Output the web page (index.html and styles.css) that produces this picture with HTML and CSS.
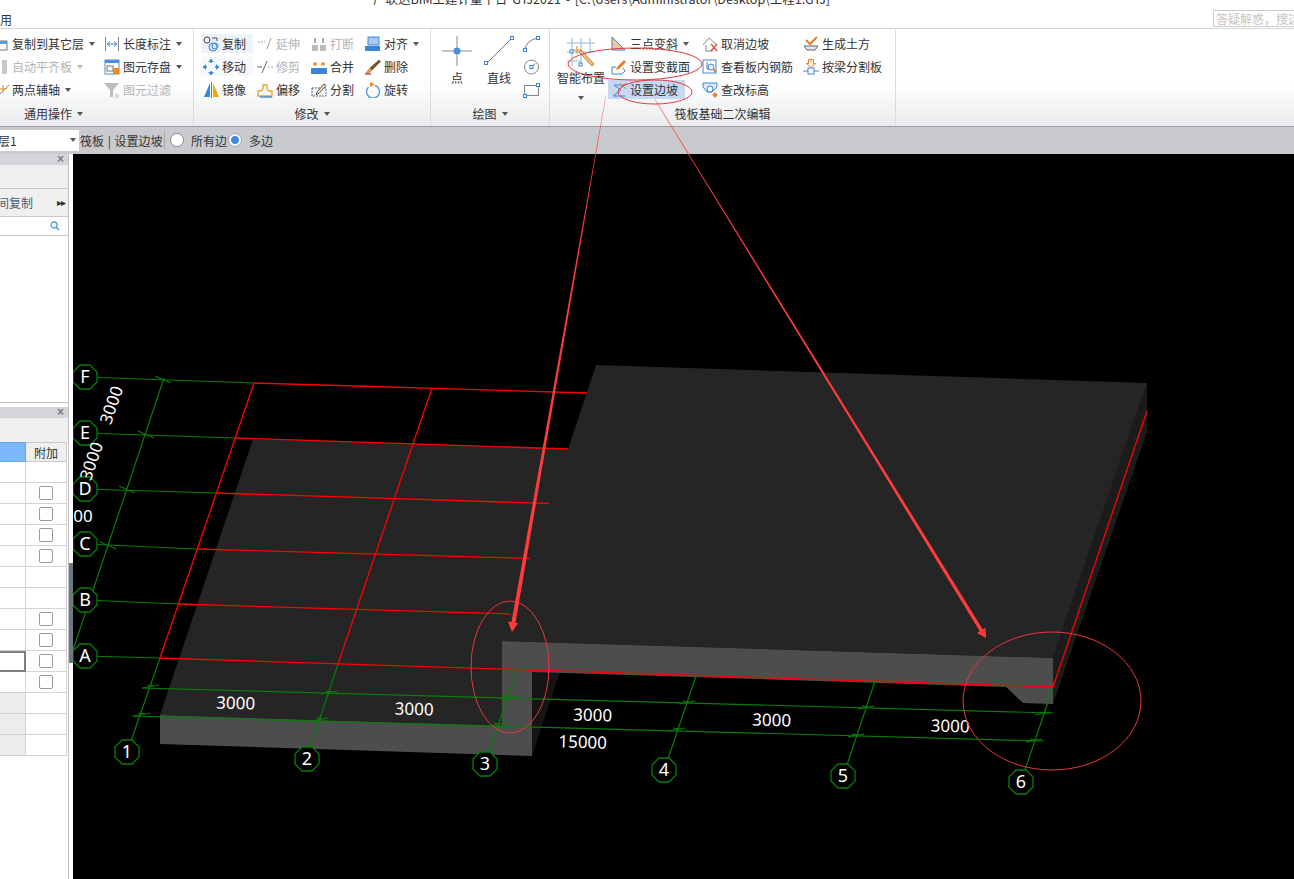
FILE: index.html
```html
<!DOCTYPE html>
<html lang="zh-CN">
<head>
<meta charset="utf-8">
<title>广联达BIM土建计量平台</title>
<link rel="stylesheet" href="styles.css">
</head>
<body>
<div class="app">
  <header class="titlebar">
    <span class="menu-tab">用</span>
    <span class="app-title">广联达BIM土建计量平台 GTJ2021 - [C:\Users\Administrator\Desktop\工程1.GTJ]</span>
    <span class="help-search">答疑解惑，搜这</span>
  </header>

  <section class="ribbon">
    <div class="group group-common">
      <div class="tools tools-common">
        <div class="tool"><svg class="ic" viewBox="0 0 16 16"><rect x="1" y="5" width="13" height="9" fill="#fff" stroke="#777"/><rect x="1" y="5" width="13" height="3" fill="#5b9bd5"/></svg><span>复制到其它层</span><i class="caret"></i></div>
        <div class="tool"><svg class="ic" viewBox="0 0 16 16"><path d="M1.500 1v14M14.500 1v14" stroke="#888"/><path d="M3 8h10M3 8l3-2.500M3 8l3 2.500M13 8l-3-2.500M13 8l-3 2.500" stroke="#3d85d8" fill="none"/></svg><span>长度标注</span><i class="caret"></i></div>
        <div class="tool off"><svg class="ic" viewBox="0 0 16 16"><rect x="9" y="1" width="5" height="14" fill="#c8c8c8"/></svg><span>自动平齐板</span><i class="caret"></i></div>
        <div class="tool"><svg class="ic" viewBox="0 0 16 16"><rect x="1" y="1" width="14" height="14" fill="#fff" stroke="#4a90d9"/><rect x="1" y="1" width="14" height="3" fill="#4a90d9"/><rect x="3" y="7" width="6" height="5" fill="none" stroke="#777"/><rect x="9" y="9" width="6" height="6" fill="#f08a1d"/></svg><span>图元存盘</span><i class="caret"></i></div>
        <div class="tool"><svg class="ic" viewBox="0 0 16 16"><path d="M5 14L16 3" stroke="#888"/><path d="M10 3v8M6 7h8" stroke="#e88a20"/></svg><span>两点辅轴</span><i class="caret"></i></div>
        <div class="tool off"><svg class="ic" viewBox="0 0 16 16"><path d="M0 1h15L9 8v7H6V8z" fill="#bdbdbd"/><path d="M11 13h4M11 15h4" stroke="#bdbdbd"/></svg><span>图元过滤</span></div>
      </div>
      <div class="group-label label-common">通用操作<i class="caret"></i></div>
    </div>

    <div class="group group-modify">
      <div class="tools tools-modify">
        <div class="tool boxed hot"><svg class="ic" viewBox="0 0 16 16"><circle cx="4" cy="4" r="3" fill="#fff" stroke="#444"/><circle cx="10" cy="11" r="4" fill="#d6e8fa" stroke="#3d85d8"/><circle cx="12" cy="10" r="3" fill="none" stroke="#3d85d8"/><path d="M9 2h5v3" fill="none" stroke="#444"/></svg><span>复制</span></div>
        <div class="tool boxed off"><svg class="ic" viewBox="0 0 16 16"><path d="M1 6h7" stroke="#aaa" stroke-dasharray="2 1"/><path d="M10 13l4-11" stroke="#999"/></svg><span>延伸</span></div>
        <div class="tool boxed off"><svg class="ic" viewBox="0 0 16 16"><rect x="1" y="9" width="6" height="6" fill="#bbb"/><rect x="9" y="9" width="6" height="6" fill="#bbb"/><path d="M4 2v5M12 2v5" stroke="#aaa" stroke-width="2"/></svg><span>打断</span></div>
        <div class="tool boxed"><svg class="ic" viewBox="0 0 16 16"><rect x="3" y="1" width="11" height="8" fill="#a9c8ec" stroke="#3d85d8"/><rect x="0" y="10" width="15" height="5" fill="#3d85d8"/></svg><span>对齐</span><i class="caret"></i></div>
        <div class="tool boxed soft"><svg class="ic" viewBox="0 0 16 16"><path d="M8 0v4M8 12v4M0 8h4M12 8h4" stroke="#3d85d8" stroke-width="1.500"/><path d="M8 0l-3 3h6zM8 16l-3-3h6zM0 8l3-3v6zM16 8l-3-3v6z" fill="#3d85d8"/></svg><span>移动</span></div>
        <div class="tool boxed off-icon"><svg class="ic" viewBox="0 0 16 16"><path d="M0 8h5" stroke="#666"/><path d="M5 14l5-12" stroke="#666"/><path d="M11 8h5" stroke="#aaa" stroke-dasharray="2 1"/></svg><span>修剪</span></div>
        <div class="tool boxed"><svg class="ic" viewBox="0 0 16 16"><rect x="0" y="9" width="16" height="6" fill="#3d85d8"/><path d="M4 3v4M2 5h4M12 3v4M10 5h4" stroke="#f08a1d" stroke-width="1.500"/></svg><span>合并</span></div>
        <div class="tool boxed"><svg class="ic" viewBox="0 0 16 16"><path d="M14 1l1.500 1.500L7 11 5 9z" fill="#7a4f22" stroke="#5b3a17" stroke-width=".6"/><path d="M5 9l2 2-3 3H1z" fill="#e8a050" stroke="#8a5a20" stroke-width=".5"/><path d="M0 15h6" stroke="#c23" stroke-width="1.200"/></svg><span>删除</span></div>
        <div class="tool boxed"><svg class="ic" viewBox="0 0 16 16"><path d="M7 1L1 15h6z" fill="#3d85d8"/><path d="M8.500 0v16" stroke="#777"/><path d="M10 1l6 14h-6z" fill="#f5a800"/></svg><span>镜像</span></div>
        <div class="tool boxed"><svg class="ic" viewBox="0 0 16 16"><path d="M1 14V9h3l2-2V3h4v4l2 2h3v5z" fill="none" stroke="#e9a32a" stroke-width="1.300"/><path d="M3 15h12" stroke="#3d85d8" stroke-width="1.300"/></svg><span>偏移</span></div>
        <div class="tool boxed"><svg class="ic" viewBox="0 0 16 16"><rect x="1" y="6" width="14" height="8" fill="none" stroke="#44679c" stroke-dasharray="2 1"/><path d="M6 10l7-8 2 1.500-7 8-3 1z" fill="#f4e3b5" stroke="#555"/></svg><span>分割</span></div>
        <div class="tool boxed"><svg class="ic" viewBox="0 0 16 16"><path d="M10 3.500A6.500 6.500 0 1 1 3.500 5" fill="none" stroke="#5b9bd5" stroke-width="1.400"/><path d="M5 0l5 2.500L5 5z" fill="#f08a1d"/></svg><span>旋转</span></div>
      </div>
      <div class="group-label">修改<i class="caret"></i></div>
    </div>

    <div class="group group-draw">
      <div class="tools tools-draw">
        <div class="big-tool big-point"><svg class="ic-big" viewBox="0 0 30 30"><path d="M15 0v30M0 15h30" stroke="#8a8a8a"/><circle cx="15" cy="15" r="3.500" fill="#4a90d9"/></svg><span>点</span></div>
        <div class="big-tool big-line"><svg class="ic-big" viewBox="0 0 30 30"><path d="M2 28L28 2" stroke="#777"/><rect x="0.500" y="25.500" width="3" height="3" fill="#fff" stroke="#3d85d8"/><rect x="26.500" y="0.500" width="3" height="3" fill="#fff" stroke="#3d85d8"/></svg><span>直线</span></div>
        <div class="mini-col">
          <svg class="ic-mini" viewBox="0 0 17 16"><path d="M2 14Q3 4 15 2" fill="none" stroke="#777"/><rect x="0.500" y="12.500" width="3" height="3" fill="#fff" stroke="#3d85d8"/><rect x="13.500" y="0.500" width="3" height="3" fill="#fff" stroke="#3d85d8"/></svg>
          <svg class="ic-mini" viewBox="0 0 17 16"><circle cx="8.500" cy="8" r="7" fill="none" stroke="#888"/><path d="M8.500 8L12 4.500" stroke="#777"/><rect x="7" y="6.500" width="3" height="3" fill="#fff" stroke="#3d85d8"/></svg>
          <svg class="ic-mini" viewBox="0 0 17 16"><rect x="1.500" y="3.500" width="14" height="10" fill="none" stroke="#888"/><rect x="0.500" y="12.500" width="3" height="3" fill="#fff" stroke="#3d85d8"/><rect x="13.500" y="1.500" width="3" height="3" fill="#fff" stroke="#3d85d8"/></svg>
        </div>
      </div>
      <div class="group-label">绘图<i class="caret"></i></div>
    </div>

    <div class="group group-raft">
      <div class="tools tools-raft">
        <div class="big-tool big-smart"><svg class="ic-big" viewBox="0 0 30 30"><path d="M1 5h28M1 14h28M1 23h14M6 0v28M15 0v28M24 0v14" stroke="#8fb8e2" fill="none"/><path d="M15 12l13 14-2 2L13 14z" fill="#f5c28a" stroke="#b9772e"/><path d="M11 8v8M7 12h8" stroke="#f08a1d"/><rect x="4" y="12" width="3" height="3" fill="#fff" stroke="#3d85d8"/><rect x="13" y="25" width="3" height="3" fill="#fff" stroke="#3d85d8"/></svg><span>智能布置</span><i class="caret"></i></div>
        <div class="raft-grid">
          <div class="tool"><svg class="ic" viewBox="0 0 16 16"><path d="M1 1v13h13z" fill="#f7c59a" stroke="#3d85d8"/></svg><span>三点变斜</span><i class="caret"></i></div>
          <div class="tool"><svg class="ic" viewBox="0 0 16 16"><path d="M1 9l6-7 8 7" fill="none" stroke="#888"/><path d="M4 9v6h7" fill="none" stroke="#888"/><path d="M9 8l6 7M15 8l-6 7" stroke="#e2563a" stroke-width="1.500"/></svg><span>取消边坡</span></div>
          <div class="tool"><svg class="ic" viewBox="0 0 16 16"><path d="M3 4l4 4 7-7" fill="none" stroke="#ef7d22" stroke-width="2"/><path d="M1 10h14l-3 4H4z" fill="#dfe6ee" stroke="#667"/></svg><span>生成土方</span></div>
          <div class="tool"><svg class="ic" viewBox="0 0 16 16"><path d="M13 1L6 8l-1 3 3-1 7-7z" fill="#ef7d22"/><path d="M1 15V8h4M1 15h10l3-3-2-3" fill="none" stroke="#3d85d8"/></svg><span>设置变截面</span></div>
          <div class="tool"><svg class="ic" viewBox="0 0 16 16"><rect x="1" y="1" width="13" height="13" fill="#fff" stroke="#3d85d8"/><path d="M5 3v7h4" fill="none" stroke="#777"/><circle cx="9" cy="8" r="3" fill="#e8f1fb" stroke="#3d85d8"/><path d="M11 10l3 3" stroke="#ef7d22" stroke-width="2"/></svg><span>查看板内钢筋</span></div>
          <div class="tool"><svg class="ic" viewBox="0 0 16 16"><path d="M8 0v3M5.500 0.500h5v4h2L8 8.500 3.500 4.500h2z" fill="#fff" stroke="#ef7d22"/><path d="M0 12h5M11 12h5" stroke="#3d85d8"/><rect x="5" y="9" width="6" height="6" fill="#fff" stroke="#3d85d8"/></svg><span>按梁分割板</span></div>
          <div class="tool slope-on"><svg class="ic" viewBox="0 0 16 16"><path d="M14 3H3l7 5-8 6h12" fill="none" stroke="#3d85d8"/><path d="M9 1l6 6M15 1L9 7" stroke="#ef7d22"/></svg><span>设置边坡</span></div>
          <div class="tool"><svg class="ic" viewBox="0 0 16 16"><path d="M1 1h14v4l-5 5H5L1 5z" fill="#dde9f6" stroke="#3d85d8"/><circle cx="8" cy="7" r="3" fill="#fff" stroke="#3d85d8"/><rect x="11" y="11" width="4" height="4" fill="#ef7d22" transform="rotate(45 13 13)"/></svg><span>查改标高</span></div>
        </div>
      </div>
      <div class="group-label">筏板基础二次编辑</div>
    </div>
  </section>

  <section class="optbar">
    <div class="combo"><span>层1</span><i class="caret"></i></div>
    <span class="opt-text">筏板 | 设置边坡</span>
    <i class="opt-sep"></i>
    <i class="radio"></i>
    <span class="opt-all">所有边</span>
    <i class="radio radio-on"></i>
    <span class="opt-multi">多边</span>
  </section>

  <main class="workspace">
    <aside class="side">
      <div class="panel panel-top">
        <div class="panel-head">×</div>
        <div class="panel-band"></div>
        <div class="panel-tabs"><span class="clip-text">间复制</span><span class="more">▸▸</span></div>
        <div class="panel-search"><svg class="search-ic" viewBox="0 0 10 10"><circle cx="4" cy="4" r="3" fill="none" stroke="#4f9bd3" stroke-width="1.300"/><path d="M6 6l3 3" stroke="#4f9bd3" stroke-width="1.600"/></svg></div>
      </div>
      <div class="panel panel-bottom">
        <div class="panel-head">×</div>
        <div class="panel-band band-short"></div>
        <div class="prop-table">
          <div class="th th-blue"></div><div class="th">附加</div>
          <div class="td"></div><div class="td"></div>
          <div class="td"></div><div class="td"><i class="check"></i></div>
          <div class="td"></div><div class="td"><i class="check"></i></div>
          <div class="td"></div><div class="td"><i class="check"></i></div>
          <div class="td"></div><div class="td"><i class="check"></i></div>
          <div class="td"></div><div class="td"></div>
          <div class="td"></div><div class="td"></div>
          <div class="td"></div><div class="td"><i class="check"></i></div>
          <div class="td"></div><div class="td"><i class="check"></i></div>
          <div class="td td-selected"></div><div class="td"><i class="check"></i></div>
          <div class="td"></div><div class="td"><i class="check"></i></div>
          <div class="td td-grey"></div><div class="td"></div>
          <div class="td td-grey"></div><div class="td"></div>
          <div class="td td-grey"></div><div class="td"></div>
        </div>
      </div>
    </aside>
    <div class="splitter"><i class="grip"></i></div>
    <div class="viewport">
      <svg class="scene" viewBox="73 154 1221 725">
        <defs>
          <polygon id="oct" points="-5,-12 5,-12 12,-5 12,5 5,12 -5,12 -12,5 -12,-5" fill="#000" stroke="#0a7d0a" stroke-width="1.300"/>
          <path id="tickh" d="M-8 2L8 -1M-4 -1L3 0" stroke="#0a7d0a" stroke-width="1.100" fill="none"/>
          <path id="tickv" d="M-8 -4L8 3" stroke="#0a7d0a" stroke-width="1.100" fill="none"/>
        </defs>
        <polygon class="slab-side" points="1147,383 1147,432 1053,704 1053,658"/>
        <polygon class="slab-inner" points="532,672 560,672 532,756"/>
        <polygon class="slab-top" points="596,365 1147,383 1053,658 502,641 502,726 160,715 253,439 568,449"/>
        <polygon class="slab-front" points="502,641 1053,658 1053,704 1023,703 1006,687 532,672 532,756 160,744 160,715 502,726"/>

        <g class="axis-green">
          <line x1="85" y1="377" x2="254" y2="383"/>
          <line x1="85" y1="433" x2="235" y2="438"/>
          <line x1="85" y1="489" x2="216" y2="493"/>
          <line x1="85" y1="544" x2="197" y2="549"/>
          <line x1="85" y1="600" x2="178" y2="604"/>
          <line x1="85" y1="656" x2="160" y2="658"/>
          <line x1="164" y1="378" x2="73" y2="650"/>
          <line x1="160" y1="658" x2="131" y2="741"/>
          <line x1="338" y1="664" x2="310" y2="748"/>
          <line x1="517" y1="670" x2="489" y2="753"/>
          <line x1="696" y1="676" x2="668" y2="759"/>
          <line x1="875" y1="681" x2="847" y2="765"/>
          <line x1="1053" y1="687" x2="1025" y2="770"/>
          <line x1="142" y1="688" x2="1053" y2="713"/>
          <line x1="132" y1="716" x2="1044" y2="741"/>
        </g>
        <use href="#tickv" x="163" y="380"/><use href="#tickv" x="146" y="435"/><use href="#tickv" x="127" y="490"/><use href="#tickv" x="108" y="546"/><use href="#tickv" x="90" y="602"/>
        <use href="#tickh" x="151" y="686"/><use href="#tickh" x="329" y="692"/><use href="#tickh" x="508" y="697"/><use href="#tickh" x="687" y="702"/><use href="#tickh" x="866" y="707"/><use href="#tickh" x="1043" y="713"/>
        <use href="#tickh" x="142" y="714"/><use href="#tickh" x="320" y="719"/><use href="#tickh" x="498" y="724"/><use href="#tickh" x="677" y="729"/><use href="#tickh" x="856" y="735"/><use href="#tickh" x="1034" y="740"/>

        <g class="axis-red">
          <line x1="254" y1="383" x2="587" y2="393"/>
          <line x1="235" y1="438" x2="568" y2="449"/>
          <line x1="216" y1="493" x2="549" y2="503.500"/>
          <line x1="197" y1="549" x2="530" y2="558.500"/>
          <line x1="178" y1="604" x2="511" y2="614"/>
          <line x1="160" y1="658" x2="1053" y2="687"/>
          <line x1="160" y1="658" x2="254" y2="383"/>
          <line x1="338" y1="664" x2="432" y2="388"/>
          <line x1="1053" y1="687" x2="1147" y2="411"/>
        </g>

        <use href="#oct" x="85" y="377"/><use href="#oct" x="85" y="433"/><use href="#oct" x="85" y="489"/><use href="#oct" x="85" y="544"/><use href="#oct" x="85" y="600"/><use href="#oct" x="85" y="656"/>
        <use href="#oct" x="127" y="752"/><use href="#oct" x="307" y="759"/><use href="#oct" x="485" y="764"/><use href="#oct" x="664" y="770"/><use href="#oct" x="843" y="776"/><use href="#oct" x="1021" y="782"/>

        <g class="axis-name">
          <text x="85" y="383">F</text><text x="85" y="439">E</text><text x="85" y="495">D</text><text x="85" y="550">C</text><text x="85" y="606">B</text><text x="85" y="662">A</text>
          <text x="127" y="758">1</text><text x="307" y="765">2</text><text x="485" y="770">3</text><text x="664" y="776">4</text><text x="843" y="782">5</text><text x="1021" y="788">6</text>
        </g>
        <g class="dim">
          <text transform="translate(235.500 709) rotate(1.700)">3000</text>
          <text transform="translate(414 715) rotate(1.700)">3000</text>
          <text transform="translate(592.500 721) rotate(1.700)">3000</text>
          <text transform="translate(771.500 726) rotate(1.700)">3000</text>
          <text transform="translate(950 732) rotate(1.700)">3000</text>
          <text transform="translate(582.500 748) rotate(1.700)">15000</text>
          <text transform="translate(117 407) rotate(-71)">3000</text>
          <text transform="translate(97 463) rotate(-71)">3000</text>
          <text x="83" y="522">00</text>
        </g>
      </svg>
    </div>
  </main>

  <svg class="annotations" viewBox="0 0 1294 879">
    <ellipse cx="635" cy="64" rx="67" ry="16"/>
    <ellipse cx="655" cy="92" rx="37" ry="12"/>
    <ellipse cx="510" cy="667" rx="39" ry="66"/>
    <ellipse cx="1052" cy="701" rx="89" ry="69"/>
    <polygon class="arrow" points="605.700,96 606,96 515.500,622.700 518,623.200 512,632 508,621.500 511.500,622"/>
    <polygon class="arrow" points="655,100 655.400,99.800 982.800,629.400 985.500,627.700 986,638 977,633 979.800,631.200"/>
  </svg>
</div>
</body>
</html>
```
FILE: styles.css
```css
* { box-sizing: border-box; }
html, body { margin: 0; padding: 0; background: #fff; }
body { font-family: "Noto Sans CJK SC", "Liberation Sans", sans-serif; font-size: 12px; color: #333; }
.app { position: relative; width: 1294px; height: 879px; overflow: hidden; display: flex; flex-direction: column; }

.titlebar { height: 29px; flex: none; display: flex; align-items: flex-start; border-bottom: 1px solid #d6d6d6; background: #fff; overflow: hidden; }
.menu-tab { margin-top: 11px; font-size: 12px; line-height: 17px; }
.app-title { margin: -10px 0 0 361px; font-size: 12.500px; line-height: 18px; white-space: nowrap; word-spacing: 2px; }
.help-search { margin: 10px 0 0 auto; width: 81px; height: 17px; border: 1px solid #ccc; border-right: 0; color: #c4c4c4; font-size: 12px; line-height: 15px; padding-left: 2px; white-space: nowrap; overflow: hidden; flex: none; }

.ribbon { height: 98px; flex: none; display: flex; background: linear-gradient(#fff 0, #fff 55%, #e9ebed 100%); border-bottom: 1px solid #9b9da0; }
.group { flex: none; display: flex; flex-direction: column; height: 97px; border-right: 1px solid #d9dbdd; overflow: hidden; }
.group-common { width: 194px; }
.group-modify { width: 237px; }
.group-draw { width: 119px; }
.group-raft { width: 346px; }
.tools { height: 76px; flex: none; padding-top: 3px; }
.group-label { height: 18px; flex: none; display: flex; align-items: center; justify-content: center; line-height: 18px; white-space: nowrap; }
.label-common { padding-right: 86px; }
.caret { display: inline-block; flex: none; width: 0; height: 0; border: 3.500px solid transparent; border-top: 4px solid #555; border-bottom: 0; margin-left: 5px; }

.tool { display: flex; align-items: center; gap: 3px; height: 19px; white-space: nowrap; }
.tool .caret { margin-left: 2px; }
.tool.off { color: #b4b4b4; }
.tool.off .caret { border-top-color: #b4b4b4; }
.off-icon { color: #b4b4b4; }
.ic { width: 16px; height: 16px; flex: none; display: block; }

.tools-common { display: grid; grid-template-columns: 111px 89px; grid-auto-rows: 23px; align-items: center; margin-left: -7px; }
.tools-modify { display: grid; grid-template-columns: 54px 54px 54px 58px; grid-auto-rows: 23px; align-items: center; padding-left: 7px; }
.tool.boxed { padding-left: 2px; }
.tool.hot { background: #edf3fb; margin-right: 2px; }
.tool.soft { background: #f6f8fb; margin-right: 2px; }

.tools-draw { display: flex; padding-left: 11px; }
.big-tool { display: flex; flex-direction: column; align-items: center; flex: none; }
.ic-big { width: 30px; height: 30px; display: block; }
.big-point { width: 30px; padding-top: 4px; gap: 3px; }
.big-point span { line-height: 18px; }
.big-line { width: 30px; margin-left: 12px; padding-top: 4px; gap: 3px; }
.big-line span { line-height: 18px; }
.mini-col { margin-left: 9px; padding-top: 4px; display: flex; flex-direction: column; gap: 7px; }
.ic-mini { width: 17px; height: 16px; display: block; }

.tools-raft { display: flex; padding-left: 7px; }
.big-smart { width: 48px; padding-top: 6px; gap: 1px; }
.big-smart span { line-height: 18px; white-space: nowrap; }
.big-smart .caret { margin: 8px 0 0; }
.raft-grid { display: grid; grid-template-columns: 91px 101px 90px; grid-auto-rows: 23px; align-items: center; margin-left: 7px; }
.raft-grid .tool { margin-left: -1px; }
.raft-grid .slope-on { background: #c7d8f0; margin-right: 18px; margin-left: -4px; padding-left: 3px; }

.optbar { height: 27px; flex: none; display: flex; align-items: center; background: #c8cacd; padding-bottom: 1px; }
.combo { width: 79px; height: 21px; background: #fff; display: flex; align-items: center; justify-content: space-between; padding-right: 3px; margin-right: 1px; flex: none; }
.combo span { margin-left: -2px; }
.opt-text { white-space: nowrap; width: 84px; flex: none; word-spacing: 1px; }
.opt-sep { width: 1px; height: 18px; background: #a8a8a8; flex: none; margin-right: 5px; }
.radio { width: 14px; height: 14px; border-radius: 50%; background: #fff; border: 1px solid #8a8a8a; flex: none; }
.radio-on { background: radial-gradient(circle, #3d8be0 0, #3d8be0 3.500px, #fff 4.500px); border-color: #a5a5a5; }
.opt-all { margin-left: 7px; width: 37px; flex: none; white-space: nowrap; }
.opt-multi { margin-left: 7px; white-space: nowrap; }

.workspace { flex: 1; min-height: 0; display: flex; }
.side { width: 69px; flex: none; border-right: 1px solid #bfc1c4; display: flex; flex-direction: column; background: #fff; }
.splitter { width: 4px; flex: none; background: #fff; padding-top: 409px; }
.grip { display: block; height: 100px; background: #6e7880; }
.viewport { flex: 1; background: #000; min-width: 0; }
.scene { display: block; width: 1221px; height: 725px; }

.panel-head { height: 11px; background: #d3d5da; color: #7d7d7d; text-align: right; padding-right: 4px; font: bold 12px/11px "Liberation Sans", sans-serif; }
.panel-top { height: 249px; border-bottom: 1px solid #c4c4c4; flex: none; }
.panel-band { height: 24px; background: #efefef; border-bottom: 1px solid #c9c9c9; }
.panel-tabs { height: 28px; display: flex; align-items: center; justify-content: space-between; background: #efefef; border-bottom: 1px solid #c9c9c9; padding-right: 3px; overflow: hidden; }
.clip-text { margin-left: -3px; color: #4a5a6c; white-space: nowrap; }
.more { font: 10px/1 "DejaVu Sans", sans-serif; letter-spacing: -1px; color: #333; }
.panel-search { height: 19px; border-bottom: 1px solid #c9c9c9; display: flex; align-items: center; justify-content: flex-end; padding-right: 8px; }
.search-ic { width: 10px; height: 10px; display: block; }
.panel-bottom { margin-top: 4px; flex: none; }
.band-short { border-bottom: 0; height: 24px; }
.prop-table { display: grid; grid-template-columns: 26px 41px; grid-template-rows: 20px repeat(14, 21px); }
.th { background: #efefef; border: 1px solid #c9c9c9; border-width: 1px 1px 1px 0; text-align: center; font-size: 12px; line-height: 19px; }
.th-blue { background: #7ab8fb; border-color: #6aa6e6; }
.td { border: 1px solid #d4d4d4; border-width: 0 1px 1px 0; display: flex; align-items: center; justify-content: center; background: #fff; }
.td-grey { background: #ececec; }
.td-selected { border: 2px solid #808080; border-left: 0; background: #fff; }
.check { width: 14px; height: 14px; border: 1px solid #9a9a9a; border-radius: 2px; background: #fff; display: block; }

.slab-top { fill: #252525; }
.slab-front { fill: #4d4d4d; }
.slab-side { fill: #1b1b1b; }
.slab-inner { fill: #151515; }
.axis-green line { stroke: #0a7d0a; stroke-width: 1.200; }
.axis-red line { stroke: #ff0000; stroke-width: 1.300; }
.axis-name text { fill: #fff; font: 18px "Noto Sans", sans-serif; text-anchor: middle; }
.dim text { fill: #fff; font: 17px "Noto Sans", sans-serif; text-anchor: middle; }

.annotations { position: absolute; left: 0; top: 0; width: 1294px; height: 879px; pointer-events: none; }
.annotations ellipse { fill: none; stroke: #e8383a; stroke-width: 1; }
.annotations .arrow { fill: #ff3b3b; }
```
